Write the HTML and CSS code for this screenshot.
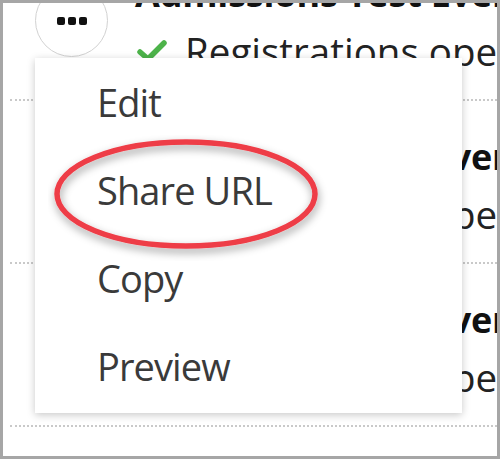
FILE: index.html
```html
<!DOCTYPE html>
<html>
<head>
<meta charset="utf-8">
<link rel="stylesheet" href="styles.css">
</head>
<body>
<div class="frame">
  <div class="list">
    <div class="row">
      <div class="actions">
        <button class="more" aria-label="More actions"><span class="dot"></span><span class="dot"></span><span class="dot"></span></button>
      </div>
      <div class="info">
        <div class="title">Admissions Test Event</div>
        <div class="status"><svg class="check" viewBox="0 0 30 22" width="30" height="22"><path d="M3 12 L11 19 L27 3" fill="none" stroke="#4db34a" stroke-width="5.5" stroke-linecap="round" stroke-linejoin="round"/></svg>Registrations open</div>
      </div>
    </div>
    <div class="row">
      <div class="actions">
        <button class="more" aria-label="More actions"><span class="dot"></span><span class="dot"></span><span class="dot"></span></button>
      </div>
      <div class="info">
        <div class="title">Admissions Test Event</div>
        <div class="status"><svg class="check" viewBox="0 0 30 22" width="30" height="22"><path d="M3 12 L11 19 L27 3" fill="none" stroke="#4db34a" stroke-width="5.5" stroke-linecap="round" stroke-linejoin="round"/></svg>Registrations open</div>
      </div>
    </div>
    <div class="row">
      <div class="actions">
        <button class="more" aria-label="More actions"><span class="dot"></span><span class="dot"></span><span class="dot"></span></button>
      </div>
      <div class="info">
        <div class="title">Admissions Test Event</div>
        <div class="status"><svg class="check" viewBox="0 0 30 22" width="30" height="22"><path d="M3 12 L11 19 L27 3" fill="none" stroke="#4db34a" stroke-width="5.5" stroke-linecap="round" stroke-linejoin="round"/></svg>Registrations open</div>
      </div>
    </div>
    <div class="row"></div>
  </div>

  <ul class="menu">
    <li class="item">Edit</li>
    <li class="item">Share URL</li>
    <li class="item">Copy</li>
    <li class="item">Preview</li>
  </ul>

  <svg class="highlight" width="280" height="126" viewBox="0 0 280 126">
    <defs>
      <filter id="sh" x="-10%" y="-20%" width="120%" height="150%">
        <feDropShadow dx="1" dy="4" stdDeviation="4" flood-color="#000" flood-opacity="0.38"/>
      </filter>
    </defs>
    <ellipse cx="138" cy="59" rx="129" ry="52" fill="none" stroke="#ee3c46" stroke-width="5.5" filter="url(#sh)"/>
  </svg>
</div>
</body>
</html>
```
FILE: styles.css
```css
html, body {
  margin: 0;
  padding: 0;
  background: #fff;
}

.frame {
  position: relative;
  box-sizing: border-box;
  width: 500px;
  height: 459px;
  border: 3px solid #a6a6a6;
  background: #fff;
  overflow: hidden;
  font-family: "Open Sans", "Noto Sans", sans-serif;
  color: #222;
}

.list {
  margin-top: -65px;
  padding-left: 7px;
}

.row {
  display: flex;
  height: 161px;
  border-bottom: 2px dotted #c9c9c9;
}

.actions {
  width: 125px;
  flex: none;
  padding-top: 46px;
  padding-left: 25px;
  box-sizing: border-box;
}

.more {
  width: 73px;
  height: 73px;
  border-radius: 50%;
  border: 1.5px solid #d2d2d2;
  background: #fff;
  display: flex;
  align-items: center;
  justify-content: center;
  gap: 3px;
  padding: 0;
}

.dot {
  width: 8px;
  height: 8px;
  border-radius: 2px;
  background: #111;
}

.info {
  padding-top: 34px;
  white-space: nowrap;
}

.title {
  font-size: 36px;
  line-height: 44px;
  font-weight: 700;
  letter-spacing: -0.2px;
  color: #111;
}

.status {
  margin-top: 12px;
  font-size: 38.5px;
  line-height: 46px;
  color: #222;
  display: flex;
  align-items: center;
}

.check {
  margin-left: 2px;
  margin-right: 18px;
}

.menu {
  position: absolute;
  left: 32px;
  top: 55px;
  width: 427px;
  height: 355px;
  margin: 0;
  padding: 0;
  list-style: none;
  background: #fff;
  box-shadow: 0 2px 8px rgba(0, 0, 0, 0.22);
}

.item {
  padding-left: 62px;
  font-size: 38px;
  line-height: 88px;
  letter-spacing: -0.9px;
  color: #3a3a3a;
}

.highlight {
  position: absolute;
  left: 45px;
  top: 132px;
}
```
